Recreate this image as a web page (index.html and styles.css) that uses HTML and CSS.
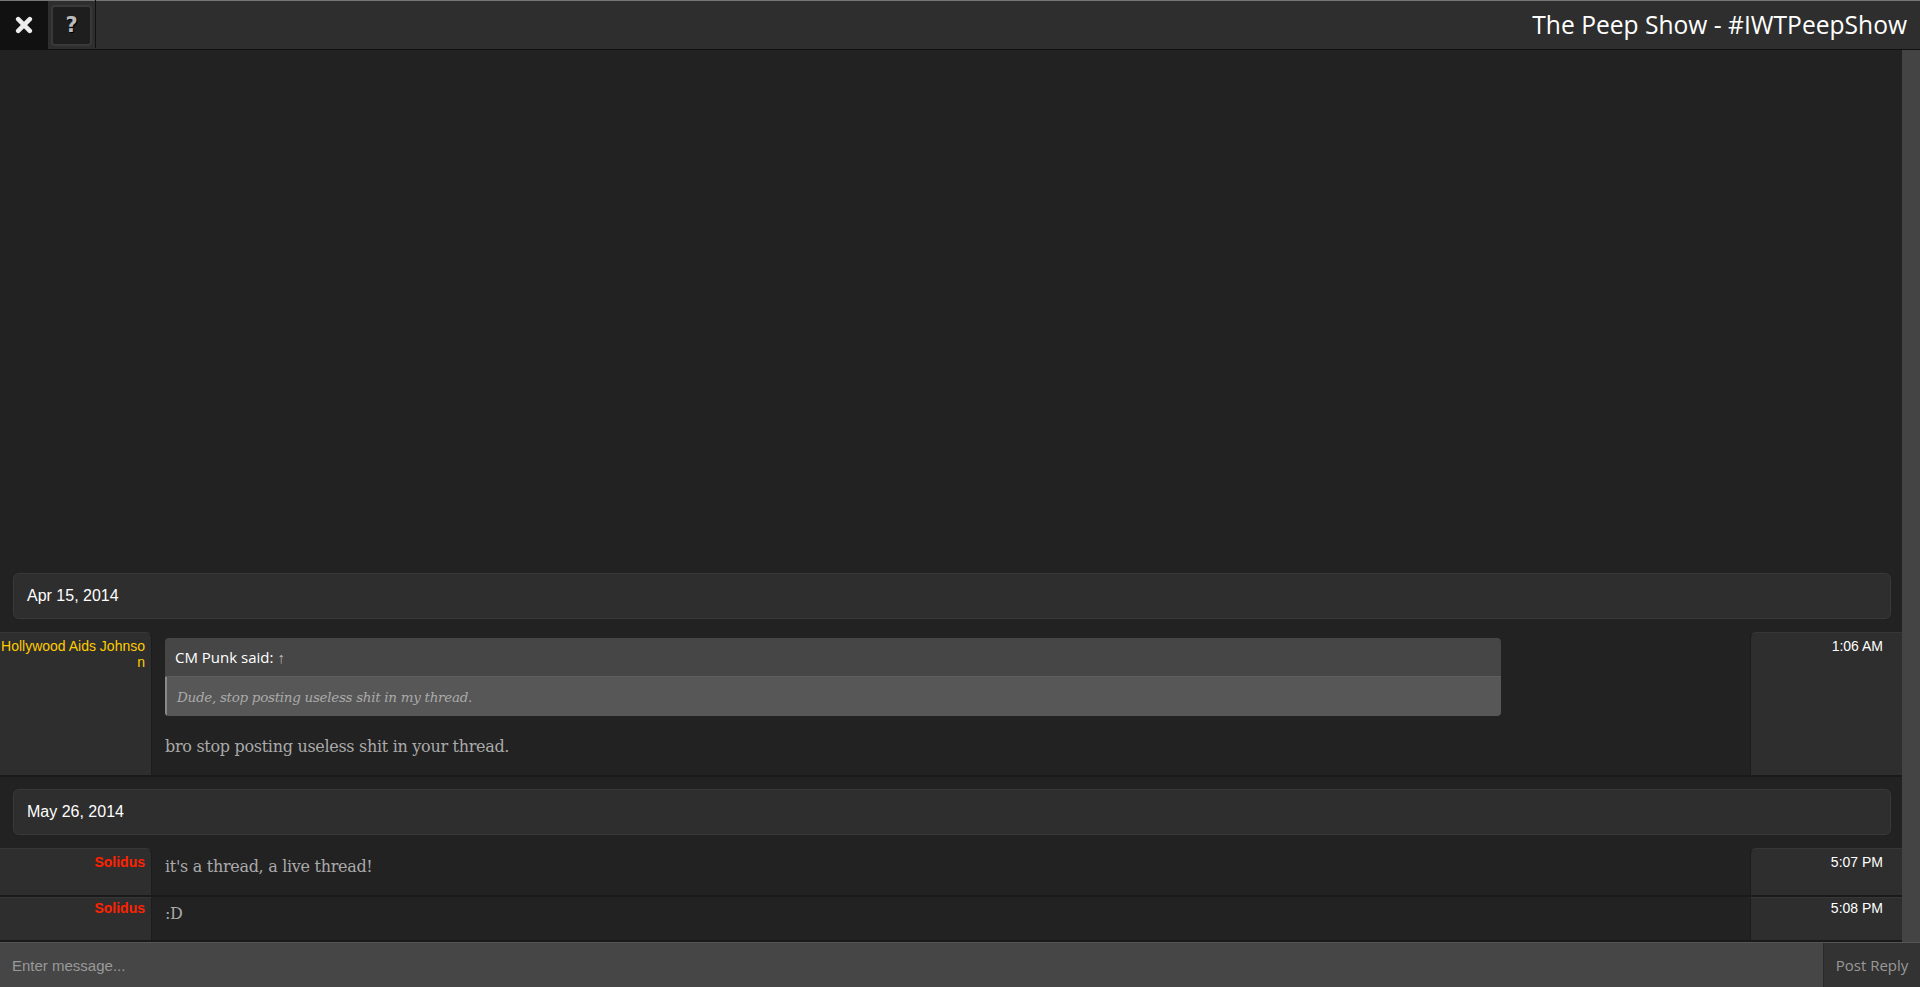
FILE: index.html
```html
<!DOCTYPE html>
<html lang="en">
<head>
    <meta charset="UTF-8">
    <meta name="viewport" content="width=device-width, initial-scale=1.0">
    <title>The Peep Show - #IWTPeepShow</title>
    <link rel="stylesheet" href="styles.css">
</head>
<body>
    <div class="topbar">
        <button class="close-btn" title="Close">
            <svg width="18" height="18" viewBox="0 0 18 18"><path d="M3.2 3.2 L14.8 14.8 M14.8 3.2 L3.2 14.8" stroke="#eee" stroke-width="4.6" stroke-linecap="round"/></svg>
        </button>
        <button class="help-btn" title="Help">?</button>
        <div class="topbar-title">The Peep Show - #IWTPeepShow</div>
    </div>

    <div class="main">
        <div class="chat">
            <div class="date-row">Apr 15, 2014</div>
            <div class="msg">
                <div class="msg-user"><span class="user-gold">Hollywood Aids Johnson</span></div>
                <div class="msg-body">
                    <div class="quote">
                        <div class="quote-head">CM Punk said: <span class="quote-arrow">&#8593;</span></div>
                        <div class="quote-text">Dude, stop posting useless shit in my thread.</div>
                    </div>
                    <p class="msg-text">bro stop posting useless shit in your thread.</p>
                </div>
                <div class="msg-time">1:06 AM</div>
            </div>

            <div class="date-row">May 26, 2014</div>
            <div class="msg">
                <div class="msg-user"><span class="user-red">Solidus</span></div>
                <div class="msg-body"><p class="msg-text">it's a thread, a live thread!</p></div>
                <div class="msg-time">5:07 PM</div>
            </div>
            <div class="msg msg-cont">
                <div class="msg-user"><span class="user-red">Solidus</span></div>
                <div class="msg-body"><p class="msg-text">:D</p></div>
                <div class="msg-time">5:08 PM</div>
            </div>
        </div>
        <div class="scrollbar"></div>
    </div>

    <div class="composer">
        <input type="text" class="composer-input" placeholder="Enter message...">
        <button class="post-btn">Post Reply</button>
    </div>
</body>
</html>
```

FILE: styles.css
```css
html, body {
    margin: 0;
    height: 100%;
}
body {
    font-family: "Liberation Sans", Arial, sans-serif;
    background: #222;
    color: #fff;
    display: flex;
    flex-direction: column;
    overflow: hidden;
}
button {
    font-family: inherit;
    cursor: pointer;
}

/* top bar */
.topbar {
    height: 50px;
    display: flex;
    align-items: center;
    background: #2e2e2e;
    border-top: 1px solid #777;
    border-bottom: 1px solid #111;
    box-sizing: border-box;
    flex-shrink: 0;
}
.close-btn {
    width: 48px;
    height: 100%;
    background: #111;
    border: none;
    display: flex;
    align-items: center;
    justify-content: center;
    padding: 0;
}
.help-btn {
    width: 41px;
    height: 41px;
    margin: 0 3px;
    background: #1e1e1e;
    border: 2px solid #393939;
    border-radius: 4px;
    color: #bbb;
    font-family: "DejaVu Sans", sans-serif;
    font-weight: bold;
    font-size: 21px;
    line-height: 1;
    padding: 0;
    text-shadow: 1px 1px 0 #000;
}
.topbar-title {
    flex: 1;
    height: 100%;
    border-left: 1px solid #111;
    text-align: right;
    font-family: "Open Sans", sans-serif;
    font-size: 24.6px;
    line-height: 50px;
    padding-right: 13px;
    color: #fff;
    margin-top: -2px;
}

/* chat area */
.main {
    flex: 1;
    display: flex;
    min-height: 0;
}
.chat {
    flex: 1;
    display: flex;
    flex-direction: column;
    justify-content: flex-end;
    overflow: hidden;
}
.scrollbar {
    width: 18px;
    background: #444;
    flex-shrink: 0;
}
.date-row {
    margin: 12px 11px 13px 13px;
    height: 46px;
    box-sizing: border-box;
    padding: 0 13px;
    display: flex;
    align-items: center;
    font-size: 16px;
    background: #2e2e2e;
    border: 1px solid #393939;
    border-radius: 6px;
}
.msg {
    display: flex;
    border-bottom: 2px solid #1a1a1a;
}
.msg-user,
.msg-time {
    width: 152px;
    flex-shrink: 0;
    box-sizing: border-box;
    background: #2e2e2e;
    border-top: 1px solid #363636;
    text-align: right;
    font-size: 14px;
    line-height: 16px;
}
.msg-user {
    padding: 5px 6px 0 0;
    border-right: 1px solid #1c1c1c;
    border-top-right-radius: 6px;
    word-break: break-all;
}
.msg-time {
    padding: 5px 19px 0 0;
    border-left: 1px solid #1c1c1c;
    border-top-left-radius: 6px;
    color: #fff;
}
.msg-cont .msg-user,
.msg-cont .msg-time {
    border-radius: 0;
    padding-top: 2px;
}
.user-gold {
    color: #ffcc00;
}
.user-red {
    color: #ff2200;
    font-weight: bold;
}
.msg-body {
    flex: 1;
    padding: 6px 13px 0 13px;
    min-width: 0;
}
.msg-text {
    font-family: "DejaVu Serif", Georgia, serif;
    font-size: 16px;
    line-height: 20px;
    color: #aaa;
    margin: 0;
    padding: 3px 0 18px 0;
    letter-spacing: -0.3px;
}
.msg-cont .msg-text {
    padding: 1px 0 16px 0;
}
.quote {
    max-width: 1336px;
    border-radius: 4px;
    overflow: hidden;
    margin-bottom: 18px;
}
.quote-head {
    background: #464646;
    height: 39px;
    box-sizing: border-box;
    padding: 0 10px;
    display: flex;
    align-items: center;
    font-family: "Open Sans", sans-serif;
    font-size: 15px;
    color: #fff;
    border-bottom: 1px solid #5e5e5e;
}
.quote-arrow {
    color: #bbb;
    margin-left: 4px;
}
.quote-text {
    background: #575757;
    border-left: 2px solid #8a8a8a;
    height: 39px;
    box-sizing: border-box;
    padding: 0 10px;
    display: flex;
    align-items: center;
    font-family: "DejaVu Serif", Georgia, serif;
    font-style: italic;
    font-size: 13.5px;
    color: #aaa;
    letter-spacing: -0.3px;
}

/* composer */
.composer {
    height: 45px;
    display: flex;
    flex-shrink: 0;
    background: #464646;
    border-top: 1px solid #555;
    box-sizing: border-box;
}
.composer-input {
    flex: 1;
    background: transparent;
    border: none;
    outline: none;
    padding: 0 12px;
    font-family: "Liberation Sans", Arial, sans-serif;
    font-size: 15px;
    color: #ddd;
}
.composer-input::placeholder {
    color: #999;
}
.post-btn {
    width: 97px;
    background: #333;
    border: none;
    border-left: 1px solid #2a2a2a;
    font-family: "Open Sans", sans-serif;
    font-size: 15px;
    color: #999;
    padding: 0;
}
```
